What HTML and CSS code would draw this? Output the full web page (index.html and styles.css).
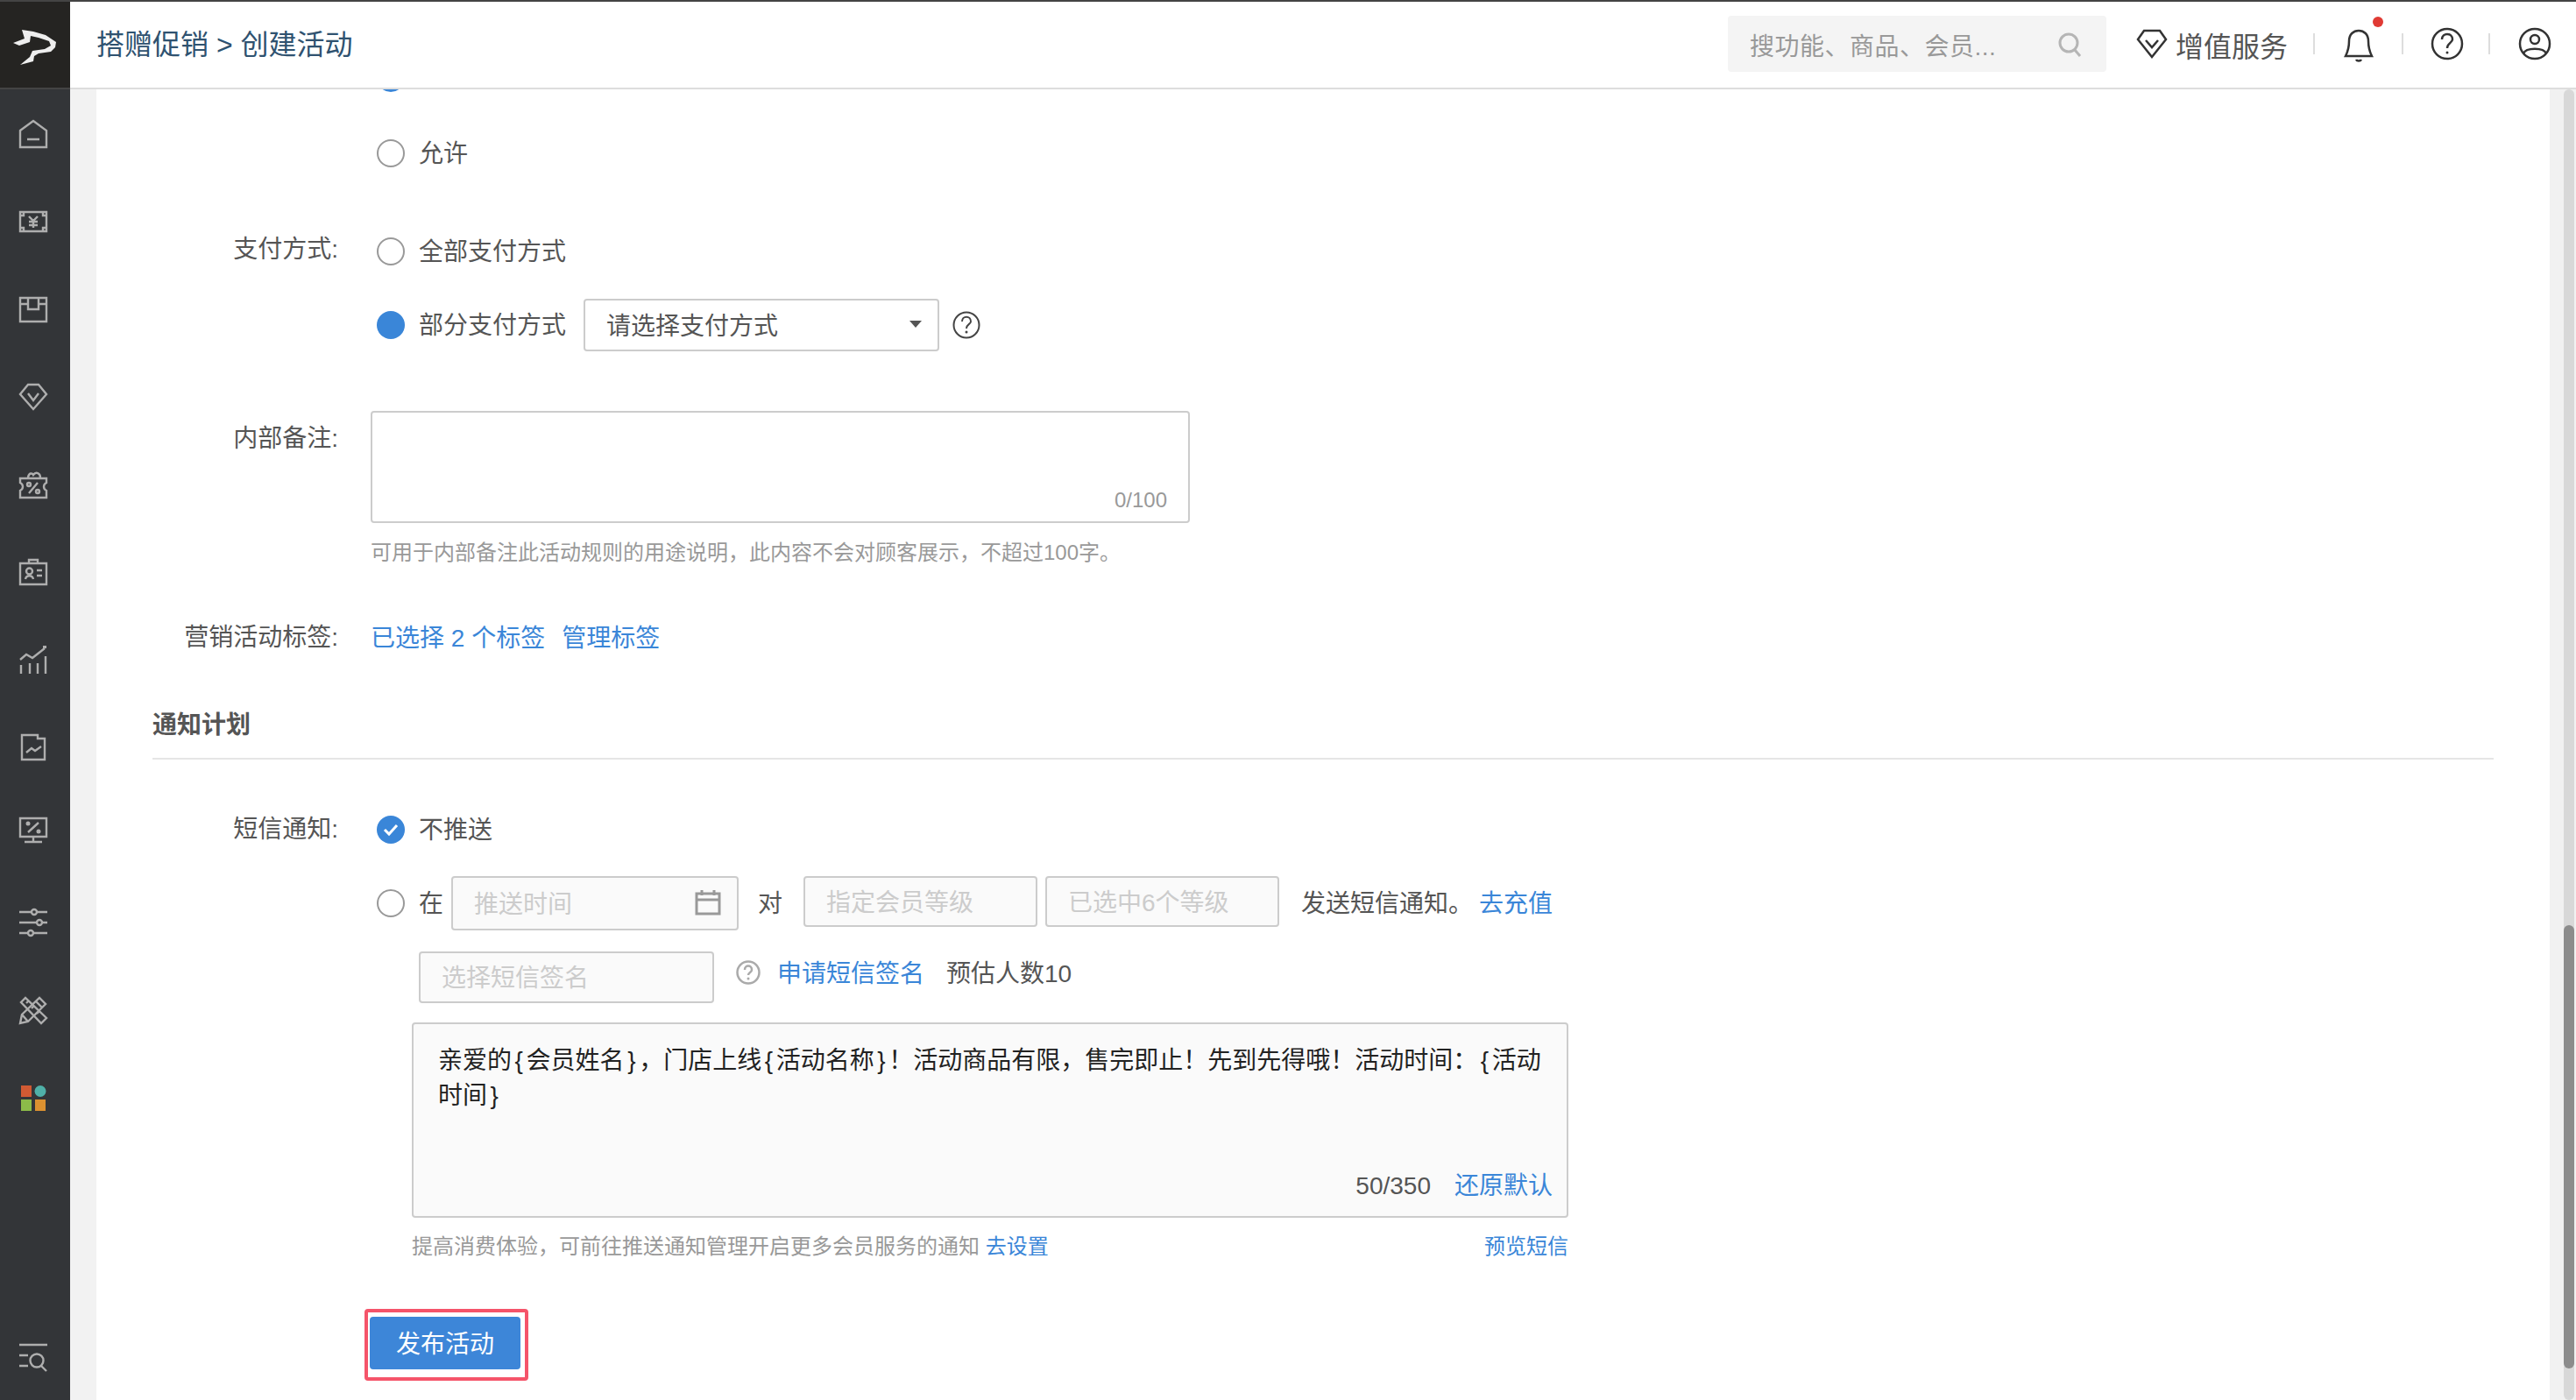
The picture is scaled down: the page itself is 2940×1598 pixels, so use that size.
FILE: index.html
```html
<!DOCTYPE html>
<html lang="zh-CN">
<head>
    <meta charset="UTF-8">
    <title>搭赠促销 - 创建活动</title>
    <link rel="stylesheet" href="styles.css">
</head>
<body>

<div class="app">
    <aside class="sidebar">
        <div class="logo">
            <svg width="52" height="44" viewBox="0 0 52 44"><path d="M1 17 L14 12 L11 2 L24 4 L38 8 L50 16 L49 22 L44 27 L30 29 L25 32 L24 38 L9 42 L20 33 L23 26 L37 24 L44 20 L42 15 L30 11 L21 9 L20 16 L8 20Z" fill="#eee"/></svg>
        </div>
        <nav class="nav">
            <div class="nav-item"><svg width="32" height="32" viewBox="0 0 32 32"><path d="M1 12 L16 1 L31 12 V31 H1Z M9 22 H23"/></svg></div>
            <div class="nav-item"><svg width="32" height="32" viewBox="0 0 32 32"><path d="M1 5 H31 V27 H1Z M11 10 L16 15 L21 10 M16 15 V23 M11 16 H21 M11 20 H21"/><path d="M1 9 H5 V5 M27 5 V9 H31 M1 23 H5 V27 M27 27 V23 H31"/></svg></div>
            <div class="nav-item"><svg width="32" height="32" viewBox="0 0 32 32"><path d="M1 3 H31 V30 H1Z M1 10 H10 M22 10 H31 M10 3 V16 H22 V3"/></svg></div>
            <div class="nav-item"><svg width="32" height="32" viewBox="0 0 32 32"><path d="M10 2 H22 L31 13 L16 30 L1 13Z M10 12 L16 20 L22 12"/></svg></div>
            <div class="nav-item"><svg width="32" height="32" viewBox="0 0 32 32"><path d="M1 9 H31 V14 C27 16 27 21 31 23 V31 H1 V23 C5 21 5 16 1 14Z M10 8 C11 2 15 3 16 5 C19 1 24 3 24 8 M21 14 L11 26"/><circle cx="11" cy="16" r="2"/><circle cx="21" cy="24" r="2"/></svg></div>
            <div class="nav-item"><svg width="32" height="32" viewBox="0 0 32 32"><path d="M1 6 H31 V30 H1Z M11 2 H21 V6 H11Z M7 24 C8 19 15 19 16 24 M20 14 H26 M20 20 H26"/><circle cx="11.500" cy="15" r="3.500"/></svg></div>
            <div class="nav-item"><svg width="32" height="32" viewBox="0 0 32 32"><path d="M1 16 L8 10 L15 14 L29 3 M2 22 V32 M12 20 V32 M21 20 V32 M30 12 V32"/><rect class="solid" x="27" y="0" width="4" height="3"/></svg></div>
            <div class="nav-item"><svg width="32" height="32" viewBox="0 0 32 32"><path d="M3 2 H21 V6 H29 V30 H3Z M8 22 L14 17 L18 20 L25 15"/></svg></div>
            <div class="nav-item nudge-up"><svg width="32" height="32" viewBox="0 0 32 32"><path d="M1 3 H31 V24 H1Z M16 24 V29 M6 30 H26 M22 8 L10 19"/><circle class="solid" cx="10" cy="9" r="2.500"/><circle class="solid" cx="22" cy="18" r="2.500"/></svg></div>
            <div class="nav-item"><svg width="32" height="32" viewBox="0 0 32 32"><path d="M0 4 H14 M20 4 H32 M0 16 H20 M26 16 H32 M0 28 H10 M16 28 H32"/><circle cx="17" cy="4" r="3"/><circle cx="23" cy="16" r="3"/><circle cx="13" cy="28" r="3"/></svg></div>
            <div class="nav-item"><svg width="32" height="32" viewBox="0 0 32 32"><path d="M1 31 L3 21 L23 2 L30 9 L10 29Z M3 21 L10 29 M19 6 L26 13"/><path d="M2 7 L7 2 L31 25 L25 31Z M8 8 L11 5 M14 14 L17 11 M20 20 L23 17"/></svg></div>
            <div class="nav-item"><svg width="32" height="32" viewBox="0 0 32 32"><rect class="tile" x="2" y="2" width="12" height="13" fill="#d05a33"/><circle class="tile" cx="24" cy="8.500" r="6.500" fill="#4fb0a8"/><rect class="tile" x="2" y="18" width="12" height="13" fill="#8cbb49"/><rect class="tile" x="18" y="18" width="12" height="13" fill="#dc9130"/></svg></div>
            <div class="nav-item nav-bottom"><svg width="32" height="32" viewBox="0 0 32 32"><path d="M0 2 H32 M0 14 H10 M0 26 H10 M25 26 L31 32"/><circle cx="20" cy="20" r="7.500"/></svg></div>
        </nav>
    </aside>

    <div class="main">
        <header class="topbar">
            <div class="crumb">搭赠促销 &gt; 创建活动</div>
            <div class="search">
                <span>搜功能、商品、会员...</span>
                <svg width="28" height="30" viewBox="0 0 28 30"><circle cx="13" cy="13" r="10"/><path d="M20 21 L26 28"/></svg>
            </div>
            <div class="vip">
                <svg width="36" height="34" viewBox="0 0 36 34"><path d="M9 2 H27 L34 12 L18 32 L2 12Z M11 13 L18 21 L25 13"/></svg>
                <span>增值服务</span>
            </div>
            <span class="sep sep-vip"></span>
            <div class="bell">
                <svg width="36" height="38" viewBox="0 0 36 38"><path d="M3 31 C6 25 7 18 7 14 C7 6 12 2 18 2 C24 2 29 6 29 14 C29 18 30 25 33 31Z M15 35 C16 37 20 37 21 35"/></svg>
                <span class="dot"></span>
            </div>
            <span class="sep sep-bell"></span>
            <svg class="tool-icon" width="38" height="38" viewBox="0 0 38 38"><circle cx="19" cy="19" r="17"/><path d="M13 14 C13 6 25 6 25 14 C25 18 19 18 19 24"/><circle class="solid" cx="19" cy="29" r="1.500"/></svg>
            <span class="sep sep-help"></span>
            <svg class="tool-icon" width="38" height="38" viewBox="0 0 38 38"><circle cx="19" cy="19" r="17"/><circle cx="19" cy="14" r="5"/><path d="M6 30 C9 23 29 23 32 30"/></svg>
        </header>

        <div class="body-wrap">
            <div class="gutter"></div>
            <main class="page">
                <div class="row row-clipped">
                    <div class="label"></div>
                    <span class="radio on"></span><span class="opt">不允许</span>
                </div>
                <div class="row row-allow">
                    <div class="label"></div>
                    <span class="radio"></span><span class="opt">允许</span>
                </div>

                <div class="row row-pay">
                    <div class="label label-up">支付方式:</div>
                    <span class="radio"></span><span class="opt">全部支付方式</span>
                </div>
                <div class="row row-pay2">
                    <div class="label"></div>
                    <span class="radio on"></span><span class="opt">部分支付方式</span>
                    <div class="select">
                        <span>请选择支付方式</span>
                        <i class="caret"></i>
                    </div>
                    <svg class="help" width="32" height="32" viewBox="0 0 32 32"><circle cx="16" cy="16" r="14.500"/><path d="M11 12 C11 5 21 5 21 12 C21 15 16 15 16 20"/><circle class="solid" cx="16" cy="24" r="1.500"/></svg>
                </div>

                <div class="row row-memo">
                    <div class="label label-memo">内部备注:</div>
                    <div class="memo"><span class="memo-count">0/100</span></div>
                </div>
                <div class="row row-hint">
                    <div class="label"></div>
                    <span class="hint">可用于内部备注此活动规则的用途说明&#xFF0C;此内容不会对顾客展示&#xFF0C;不超过100字。</span>
                </div>

                <div class="row row-tags">
                    <div class="label">营销活动标签:</div>
                    <a class="link">已选择 2 个标签</a>
                    <a class="link link-manage">管理标签</a>
                </div>

                <h3 class="section">通知计划</h3>

                <div class="row row-sms">
                    <div class="label">短信通知:</div>
                    <span class="radio on"><svg width="20" height="16" viewBox="0 0 20 16"><path d="M3 8 L8 13 L17 3"/></svg></span><span class="opt">不推送</span>
                </div>
                <div class="row row-when">
                    <div class="label"></div>
                    <span class="radio"></span><span class="opt">在</span>
                    <div class="box box-time">
                        <span>推送时间</span>
                        <svg width="30" height="30" viewBox="0 0 30 30"><path d="M2 5 H28 V28 H2Z M2 12 H28 M8 1 V7 M22 1 V7"/></svg>
                    </div>
                    <span class="plain plain-dui">对</span>
                    <div class="box box-level">指定会员等级</div>
                    <div class="box box-level box-level2">已选中6个等级</div>
                    <span class="plain plain-send">发送短信通知。</span>
                    <a class="link link-charge">去充值</a>
                </div>
                <div class="row row-sign">
                    <div class="label"></div>
                    <div class="box box-sign">选择短信签名</div>
                    <svg class="help help-gray" width="28" height="28" viewBox="0 0 28 28"><circle cx="14" cy="14" r="12.500"/><path d="M10 11 C10 5 18 5 18 11 C18 14 14 14 14 17"/><circle class="solid" cx="14" cy="21" r="1.500"/></svg>
                    <a class="link link-sign">申请短信签名</a>
                    <span class="plain plain-count">预估人数10</span>
                </div>

                <div class="sms-wrap">
                    <div class="sms">
                        <p class="sms-text">亲爱的<b>{</b>会员姓名<b>}</b>&#xFF0C;门店上线<b>{</b>活动名称<b>}</b>&#xFF01;活动商品有限&#xFF0C;售完即止&#xFF01;先到先得哦&#xFF01;活动时间&#xFF1A;<b>{</b>活动<br>时间<b>}</b></p>
                        <div class="sms-foot">
                            <span class="sms-count">50/350</span>
                            <a class="link">还原默认</a>
                        </div>
                    </div>
                    <div class="sms-note">
                        <span>提高消费体验&#xFF0C;可前往推送通知管理开启更多会员服务的通知 <a class="link">去设置</a></span>
                        <a class="link">预览短信</a>
                    </div>
                </div>

                <div class="publish-mark">
                    <button class="publish">发布活动</button>
                </div>
            </main>
            <div class="scrollbar">
                <div class="rail"><div class="thumb"></div></div>
            </div>
        </div>
    </div>
</div>

</body>
</html>
```

FILE: styles.css
```css
* {
    box-sizing: border-box;
}
html, body {
    margin: 0;
    height: 100%;
    overflow: hidden;
}
body {
    font-family: "Liberation Sans", "Noto Sans CJK SC", sans-serif;
    font-size: 28px;
    color: #555;
    background: #fff;
}
svg {
    display: block;
    flex: none;
    fill: none;
}
.app {
    display: flex;
    height: 1598px;
    border-top: 2px solid #444;
}

/* left menu */
.sidebar {
    width: 80px;
    flex: none;
    display: flex;
    flex-direction: column;
    background: #333538;
}
.logo {
    height: 100px;
    display: flex;
    align-items: center;
    justify-content: center;
    padding: 6px 0 0 0;
    background: #252422;
    border-bottom: 2px solid #444;
}
.nav {
    flex: 1;
    display: flex;
    flex-direction: column;
    padding-top: 1px;
}
.nav-item {
    height: 100px;
    flex: none;
    display: flex;
    align-items: center;
    padding-left: 22px;
}
.nav-item svg {
    stroke: #aeaeae;
    stroke-width: 2.400;
    overflow: visible;
}
.nav-item .solid {
    fill: #aeaeae;
    stroke: none;
}
.nav-item .tile {
    stroke: none;
}
.nudge-up svg {
    margin-bottom: 12px;
}
.nav-bottom {
    margin-top: auto;
    height: 98px;
}

/* top bar */
.main {
    flex: 1;
    min-width: 0;
    display: flex;
    flex-direction: column;
}
.topbar {
    height: 100px;
    flex: none;
    display: flex;
    align-items: center;
    padding-bottom: 2px;
    background: #fff;
    border-bottom: 2px solid #ddd;
}
.crumb {
    margin-left: 30px;
    padding-bottom: 4px;
    font-size: 32px;
    color: #2f5270;
}
.search {
    margin-left: auto;
    width: 432px;
    height: 64px;
    display: flex;
    align-items: center;
    justify-content: space-between;
    padding: 2px 28px 0 25px;
    background: #f4f4f4;
    border-radius: 4px;
    color: #999;
}
.search span {
    letter-spacing: 0.500px;
}
.search svg {
    stroke: #b5b5b5;
    stroke-width: 3;
}
.vip {
    margin-left: 34px;
    display: flex;
    align-items: center;
    gap: 9px;
    font-size: 32px;
}
.vip span {
    padding-top: 2px;
}
.vip svg, .bell svg, .tool-icon {
    stroke: #333;
    stroke-width: 2.500;
}
.tool-icon .solid {
    fill: #333;
    stroke: none;
}
.sep {
    width: 2px;
    height: 24px;
    background: #ddd;
    flex: none;
}
.sep-vip {
    margin: 0 32px 0 29px;
}
.sep-bell {
    margin: 0 31px 0 31px;
}
.sep-help {
    margin: 0 32px 0 28px;
}
.bell {
    position: relative;
}
.bell svg {
    margin-top: 4px;
}
.dot {
    position: absolute;
    top: -10px;
    right: -10px;
    width: 12px;
    height: 12px;
    border-radius: 50%;
    background: #e03a34;
}
.tool-icon:last-child {
    margin-right: 28px;
}

/* page area */
.body-wrap {
    flex: 1;
    min-height: 0;
    display: flex;
}
.gutter {
    width: 30px;
    flex: none;
    background: #f2f2f2;
}
.page {
    flex: 1;
    min-width: 0;
    overflow: hidden;
    padding-right: 64px;
    background: #fff;
}
.scrollbar {
    width: 30px;
    flex: none;
    padding-left: 16px;
    padding-right: 2px;
    background: #f1f1f1;
}
.rail {
    height: 100%;
    padding-top: 954px;
    background: #d8d8d8;
    border-radius: 6px;
}
.thumb {
    height: 506px;
    background: #8c8c8c;
    border-radius: 6px;
}

/* form rows */
.row {
    display: flex;
    align-items: center;
    height: 40px;
}
.label {
    width: 276px;
    flex: none;
    margin-right: 37px;
    line-height: 1;
    text-align: right;
    white-space: nowrap;
}
.label-up {
    padding-bottom: 4px;
}
.radio {
    width: 32px;
    height: 32px;
    flex: none;
    margin-left: 7px;
    display: flex;
    align-items: center;
    justify-content: center;
    border: 2px solid #999;
    border-radius: 50%;
    background: #fff;
}
.radio.on {
    border: none;
    background: #3a86d8;
}
.radio svg {
    stroke: #fff;
    stroke-width: 3;
}
.opt {
    margin-left: 16px;
    padding-top: 2px;
    line-height: 1;
    white-space: nowrap;
}
.plain {
    padding-top: 2px;
    line-height: 1;
    white-space: nowrap;
}
.link {
    color: #3a86d8;
    white-space: nowrap;
}
.row > .link {
    padding-top: 2px;
    line-height: 1;
}
.row-clipped {
    margin-top: -33px;
}
.row-allow {
    margin-top: 46px;
}
.row-pay {
    margin-top: 72px;
}
.row-pay2 {
    height: 60px;
    margin-top: 34px;
}
.select {
    width: 406px;
    height: 60px;
    margin-left: 20px;
    display: flex;
    align-items: center;
    justify-content: space-between;
    padding: 0 18px 2px 24px;
    border: 2px solid #ccc;
    border-radius: 4px;
    background: #fff;
}
.caret {
    width: 0;
    height: 0;
    border-left: 7px solid transparent;
    border-right: 7px solid transparent;
    border-top: 8px solid #555;
}
.help {
    margin-left: 15px;
    stroke: #444;
    stroke-width: 2;
}
.help .solid {
    fill: #444;
    stroke: none;
}
.row-memo {
    height: 128px;
    margin-top: 68px;
    align-items: flex-start;
}
.label-memo {
    padding-top: 18px;
}
.memo {
    width: 935px;
    height: 128px;
    position: relative;
    border: 2px solid #ccc;
    border-radius: 4px;
}
.memo-count {
    position: absolute;
    right: 24px;
    bottom: 10px;
    font-size: 24px;
    color: #999;
}
.row-hint {
    height: 34px;
    margin-top: 17px;
}
.hint {
    line-height: 1;
    font-size: 24px;
    color: #999;
    white-space: nowrap;
}
.row-tags {
    margin-top: 60px;
}
.link-manage {
    margin-left: 19px;
}
.section {
    margin: 60px 0 0 64px;
    height: 59px;
    padding-top: 0;
    line-height: 40px;
    font-size: 28px;
    font-weight: bold;
    color: #555;
    border-bottom: 2px solid #e5e5e5;
}
.row-sms {
    margin-top: 60px;
}
.row-when {
    height: 62px;
    margin-top: 33px;
    align-items: flex-start;
}
.row-when > .radio, .row-when > .opt, .row-when > .plain, .row-when > .link {
    align-self: center;
}
.box {
    height: 58px;
    display: flex;
    align-items: center;
    padding-left: 24px;
    padding-bottom: 3px;
    flex: none;
    border: 2px solid #ccc;
    border-radius: 4px;
    background: #fafafa;
    color: #ccc;
    white-space: nowrap;
}
.box-time {
    width: 328px;
    height: 62px;
    margin-left: 9px;
    justify-content: space-between;
    padding-right: 18px;
}
.box-time svg {
    stroke: #999;
    stroke-width: 3;
}
.plain-dui {
    margin-left: 22px;
}
.box-level {
    width: 267px;
    margin-left: 24px;
}
.box-level2 {
    margin-left: 9px;
}
.plain-send {
    margin-left: 25px;
}
.link-charge {
    margin-left: 7px;
}
.row-sign {
    height: 59px;
    margin-top: 24px;
    align-items: flex-start;
}
.row-sign > .link, .row-sign > .plain {
    margin-top: 10px;
}
.box-sign {
    width: 337px;
    height: 59px;
    margin-left: 55px;
}
.help-gray {
    margin-left: 25px;
    margin-top: 10px;
    stroke: #aaa;
    stroke-width: 2.500;
}
.help-gray .solid {
    fill: #aaa;
}
.link-sign {
    margin-left: 19px;
}
.plain-count {
    margin-left: 25px;
}

/* sms text */
.sms-wrap {
    width: 1320px;
    margin: 22px 0 0 360px;
}
.sms {
    height: 223px;
    display: flex;
    flex-direction: column;
    justify-content: space-between;
    padding: 22px 16px 20px 28px;
    border: 2px solid #ccc;
    border-radius: 4px;
    background: #fafafa;
}
.sms-text {
    margin: 0;
    line-height: 40px;
    color: #222;
    white-space: nowrap;
}
.sms-text b {
    font-weight: normal;
    padding: 0 3.600px;
}
.sms-foot {
    display: flex;
    justify-content: flex-end;
    align-items: center;
    gap: 27px;
    line-height: 1;
}
.sms-note {
    display: flex;
    justify-content: space-between;
    align-items: center;
    height: 34px;
    margin-top: 15px;
    padding-bottom: 4px;
    font-size: 24px;
    color: #999;
    white-space: nowrap;
}

/* button with red marker round it */
.publish-mark {
    width: 187px;
    height: 82px;
    margin: 55px 0 0 306px;
    padding: 5px 5px 9px 2px;
    border: 4px solid #f5546a;
    border-radius: 4px;
}
.publish {
    width: 172px;
    height: 60px;
    display: block;
    padding: 0 0 3px;
    border: none;
    border-radius: 4px;
    background: #3d86d8;
    color: #fff;
    font: inherit;
}
```
